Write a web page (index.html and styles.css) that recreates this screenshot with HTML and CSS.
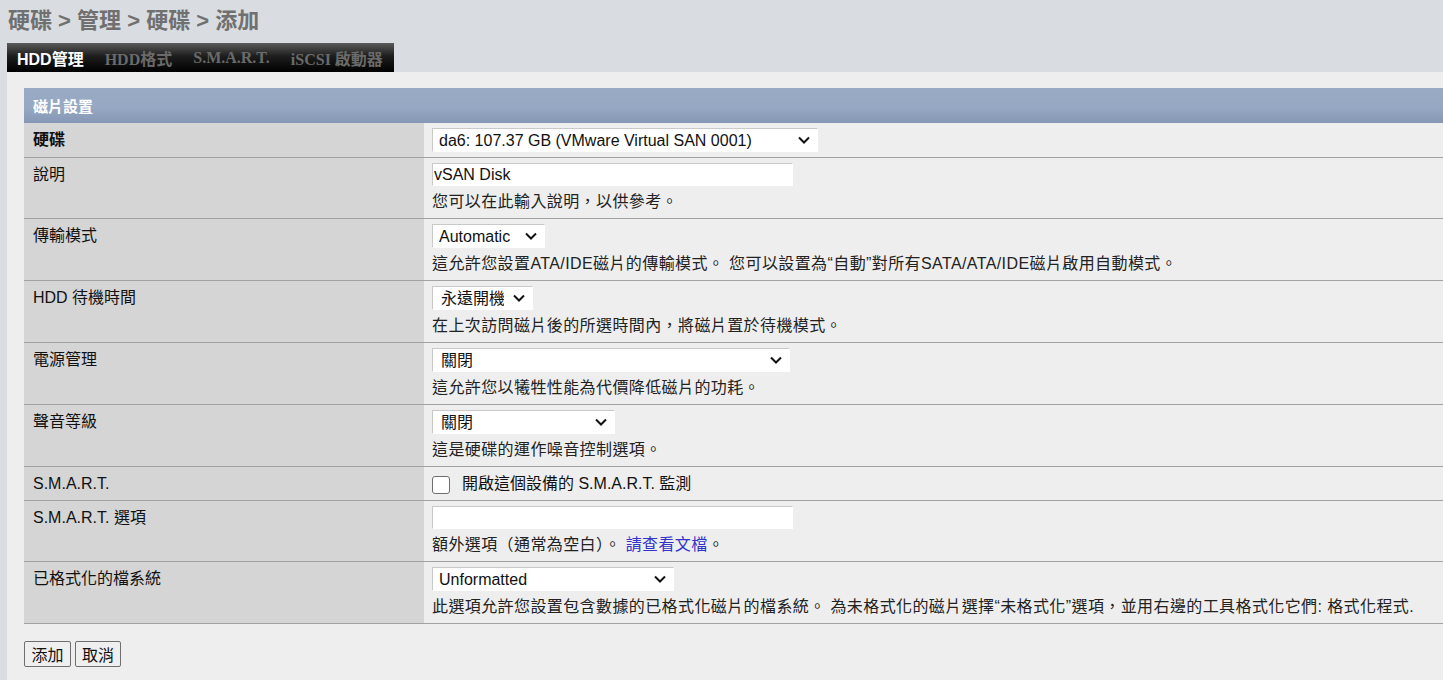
FILE: index.html
```html
<!DOCTYPE html>
<html lang="zh-Hant">
<head>
<meta charset="utf-8">
<title>硬碟 添加</title>
<link rel="stylesheet" href="styles.css">
</head>
<body>
<h1 class="crumbs">硬碟 &gt; 管理 &gt; 硬碟 &gt; 添加</h1>
<nav class="tabs">
  <span class="tab active">HDD管理</span>
  <span class="tab">HDD格式</span>
  <span class="tab">S.M.A.R.T.</span>
  <span class="tab">iSCSI 啟動器</span>
</nav>
<main class="panel">
  <table class="form">
    <tr><th colspan="2" class="head">磁片設置</th></tr>
    <tr class="first">
      <td class="label strong">硬碟</td>
      <td class="value">
        <span class="sel w-disk"><select><option>da6: 107.37 GB (VMware Virtual SAN 0001)</option></select><svg class="chev" width="12" height="8" viewBox="0 0 12 8"><path d="M1 1.5 L6 6.5 L11 1.5" fill="none" stroke="#111" stroke-width="2"/></svg></span>
      </td>
    </tr>
    <tr>
      <td class="label">說明</td>
      <td class="value">
        <input class="text" type="text" value="vSAN Disk">
        <div class="desc">您可以在此輸入說明，以供參考。</div>
      </td>
    </tr>
    <tr>
      <td class="label">傳輸模式</td>
      <td class="value">
        <span class="sel w-auto"><select><option>Automatic</option></select><svg class="chev" width="12" height="8" viewBox="0 0 12 8"><path d="M1 1.5 L6 6.5 L11 1.5" fill="none" stroke="#111" stroke-width="2"/></svg></span>
        <div class="desc">這允許您設置ATA/IDE磁片的傳輸模式。 您可以設置為“自動”對所有SATA/ATA/IDE磁片啟用自動模式。</div>
      </td>
    </tr>
    <tr>
      <td class="label">HDD 待機時間</td>
      <td class="value">
        <span class="sel w-standby"><select><option>永遠開機</option></select><svg class="chev" width="12" height="8" viewBox="0 0 12 8"><path d="M1 1.5 L6 6.5 L11 1.5" fill="none" stroke="#111" stroke-width="2"/></svg></span>
        <div class="desc">在上次訪問磁片後的所選時間內，將磁片置於待機模式。</div>
      </td>
    </tr>
    <tr>
      <td class="label">電源管理</td>
      <td class="value">
        <span class="sel w-power"><select><option>關閉</option></select><svg class="chev" width="12" height="8" viewBox="0 0 12 8"><path d="M1 1.5 L6 6.5 L11 1.5" fill="none" stroke="#111" stroke-width="2"/></svg></span>
        <div class="desc">這允許您以犧牲性能為代價降低磁片的功耗。</div>
      </td>
    </tr>
    <tr>
      <td class="label">聲音等級</td>
      <td class="value">
        <span class="sel w-sound"><select><option>關閉</option></select><svg class="chev" width="12" height="8" viewBox="0 0 12 8"><path d="M1 1.5 L6 6.5 L11 1.5" fill="none" stroke="#111" stroke-width="2"/></svg></span>
        <div class="desc">這是硬碟的運作噪音控制選項。</div>
      </td>
    </tr>
    <tr>
      <td class="label">S.M.A.R.T.</td>
      <td class="value">
        <label class="check"><input type="checkbox"><span>開啟這個設備的 S.M.A.R.T. 監測</span></label>
      </td>
    </tr>
    <tr>
      <td class="label">S.M.A.R.T. 選項</td>
      <td class="value">
        <input class="text" type="text" value="">
        <div class="desc">額外選項（通常為空白）。 <a href="#" class="link">請查看文檔</a>。</div>
      </td>
    </tr>
    <tr>
      <td class="label">已格式化的檔系統</td>
      <td class="value">
        <span class="sel w-fs"><select><option>Unformatted</option></select><svg class="chev" width="12" height="8" viewBox="0 0 12 8"><path d="M1 1.5 L6 6.5 L11 1.5" fill="none" stroke="#111" stroke-width="2"/></svg></span>
        <div class="desc">此選項允許您設置包含數據的已格式化磁片的檔系統。 為未格式化的磁片選擇“未格式化”選項，並用右邊的工具格式化它們: 格式化程式.</div>
      </td>
    </tr>
  </table>
  <div class="actions">
    <button class="btn w-add">添加</button>
    <button class="btn w-cancel">取消</button>
  </div>
</main>
</body>
</html>
```

FILE: styles.css
```css
html, body {
  margin: 0;
  padding: 0;
}
body {
  background: #d9dce1;
  font-family: "Liberation Sans", "Noto Sans CJK TC", sans-serif;
  font-size: 16px;
  color: #111;
}
.crumbs {
  margin: 0;
  padding: 6px 8px 7px;
  font-size: 22px;
  line-height: 30px;
  font-weight: bold;
  color: #707070;
}
.tabs {
  margin-left: 7px;
  width: 387px;
  height: 29px;
  display: flex;
  align-items: center;
  gap: 21px;
  padding-left: 10px;
  box-sizing: border-box;
  background: linear-gradient(to bottom, #5a5a5a 0%, #1e1e1e 45%, #000 100%);
}
.tab {
  font-family: "Liberation Serif", "Noto Sans CJK TC", serif;
  font-weight: bold;
  font-size: 16px;
  color: #6a6a6a;
  white-space: nowrap;
}
.tab.active {
  font-family: "Liberation Sans", "Noto Sans CJK TC", sans-serif;
  color: #fff;
}
.panel {
  margin-left: 7px;
  background: #eeeeee;
  padding: 16px 0 12px 17px;
  min-height: calc(100vh - 72px);
  box-sizing: border-box;
}
.form {
  width: 100%;
  border-collapse: collapse;
}
.head {
  height: 35px;
  padding: 0 9px;
  text-align: left;
  color: #fff;
  font-size: 15px;
  font-weight: bold;
  background: linear-gradient(to bottom, #99aac4 0%, #96a8c2 55%, #8597b5 100%);
}
.form td {
  border-bottom: 1px solid #a2a2a2;
  vertical-align: top;
  line-height: 24px;
}
.label {
  width: 383px;
  padding: 5px 8px 4px 9px;
  background: #d5d5d5;
}
.label.strong {
  font-weight: bold;
}
.value {
  padding: 5px 8px 4px 8px;
  white-space: nowrap;
}
.first .value {
  padding-bottom: 5px;
}
.sel {
  position: relative;
  display: block;
  width: fit-content;
}
.sel select {
  display: block;
  appearance: none;
  -webkit-appearance: none;
  height: 24px;
  margin: 0;
  padding: 0 28px 0 6px;
  border: 1px solid;
  border-color: #c9c9c9 #ffffff #ffffff #c9c9c9;
  background: #fff;
  font: 16px "Liberation Sans", "Noto Sans CJK TC", sans-serif;
  color: #111;
  box-sizing: border-box;
}
.chev {
  position: absolute;
  right: 8px;
  top: 8px;
  pointer-events: none;
}
.w-disk select { width: 386px; }
.w-auto select { width: 113px; }
.w-standby select { width: 101px; padding-left: 8px; }
.w-power select { width: 358px; padding-left: 8px; }
.w-sound select { width: 183px; padding-left: 8px; }
.w-fs select { width: 242px; }
.text {
  display: block;
  width: 361px;
  height: 23px;
  margin: 0;
  padding: 0 1px;
  border: 1px solid;
  border-color: #c9c9c9 #ffffff #ffffff #c9c9c9;
  background: #fff;
  font: 16px "Liberation Sans", "Noto Sans CJK TC", sans-serif;
  color: #111;
  box-sizing: border-box;
}
.desc {
  margin-top: 4px;
  line-height: 24px;
  color: #222;
  letter-spacing: 0.4px;
}
.link {
  color: #3333cc;
  text-decoration: none;
}
.check {
  display: flex;
  align-items: center;
  height: 24px;
}
.check input {
  appearance: none;
  -webkit-appearance: none;
  width: 18px;
  height: 18px;
  margin: 2px 12px 0 0;
  border: 1px solid #6e6e6e;
  border-radius: 3px;
  background: #fff;
  box-sizing: border-box;
}
.actions {
  display: flex;
  gap: 4px;
  margin-top: 17px;
}
.btn {
  height: 26px;
  padding: 0;
  border: 1px solid #6f6f6f;
  border-radius: 2px;
  background: #efefef;
  font: 16px "Liberation Sans", "Noto Sans CJK TC", sans-serif;
  color: #111;
}
.w-add { width: 47px; }
.w-cancel { width: 46px; }
```
